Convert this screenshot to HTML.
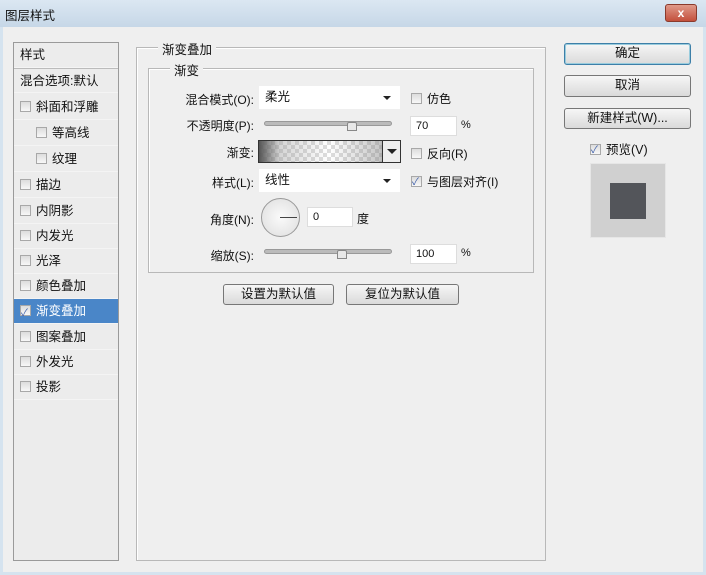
<!DOCTYPE html>
<html><head><meta charset="utf-8"><style>
*{box-sizing:border-box;margin:0;padding:0}
body{width:706px;height:575px;overflow:hidden;background:#d5e3ef;font-family:"Liberation Sans","Noto Sans CJK SC",sans-serif;font-size:12px;color:#111;position:relative}
.a{position:absolute}
.title{left:0;top:0;width:706px;height:27px;background:linear-gradient(#dbe7f2,#c6d7e7);}
.body{left:3px;top:27px;width:700px;height:545px;background:#efefef}
.list{left:13px;top:42px;width:106px;height:519px;border:1px solid #9a9a9a;background:#ececec}
.row{position:absolute;left:0;width:104px;height:25px;border-bottom:1px solid #f4f4f4;line-height:24px;padding-left:6px;font-size:12.5px}
.cb{display:inline-block;width:11px;height:11px;border:1px solid #a8a8a8;background:linear-gradient(#ddd,#f8f8f8);vertical-align:-1px;margin-right:5px;position:relative}
.chk::after{content:"✓";position:absolute;left:0;top:-4px;font-size:10px;color:#3a5ca8;}
.grp{border:1px solid #b8b8b8;box-shadow:inset 1px 1px 0 #fff}
.lg{position:absolute;background:#efefef;padding:0 4px;font-size:12.5px}
.lbl{position:absolute;text-align:right;font-size:12px}
.inp{position:absolute;background:#fff;border:1px solid #ddd;height:20px;line-height:19px;padding-left:5px;font-size:11px}
.sel{position:absolute;background:#fff;height:23px;line-height:23px;padding-left:6px;font-size:12.5px}
.sel::after{content:"";position:absolute;right:9px;top:10px;border:4px solid transparent;border-top:4px solid #222}
.track{position:absolute;height:5px;background:#bbb;border:1px solid #999;border-radius:3px}
.thumb{position:absolute;width:10px;height:9px;background:#e8e8e8;border:1px solid #888;border-radius:2px 2px 0 0}
.btn{position:absolute;border:1px solid #777;border-radius:3px;background:linear-gradient(#f6f6f6,#dadada);text-align:center;font-size:12.5px;line-height:19px}
</style></head><body>
<div class="a title"></div>
<div class="a" style="left:5px;top:5px;font-size:12.5px">图层样式</div>
<div class="a" style="left:665px;top:4px;width:32px;height:18px;background:linear-gradient(#e09a8a,#c3503c);border:1px solid #8a3a2c;border-radius:3px;color:#fff;text-align:center;font-weight:bold;line-height:16px">x</div>
<div class="a body"></div>

<div class="a list">
 <div class="row" style="top:0">样式</div>
 <div class="row" style="top:25px;border-top:1px solid #bbb">混合选项:默认</div>
 <div class="row" style="top:52px"><span class="cb"></span>斜面和浮雕</div>
 <div class="row" style="top:78px;padding-left:22px"><span class="cb"></span>等高线</div>
 <div class="row" style="top:104px;padding-left:22px"><span class="cb"></span>纹理</div>
 <div class="row" style="top:130px"><span class="cb"></span>描边</div>
 <div class="row" style="top:156px"><span class="cb"></span>内阴影</div>
 <div class="row" style="top:181px"><span class="cb"></span>内发光</div>
 <div class="row" style="top:206px"><span class="cb"></span>光泽</div>
 <div class="row" style="top:231px"><span class="cb"></span>颜色叠加</div>
 <div class="row" style="top:256px;background:#4a86c8;color:#fff"><span class="cb chk"></span>渐变叠加</div>
 <div class="row" style="top:282px"><span class="cb"></span>图案叠加</div>
 <div class="row" style="top:307px"><span class="cb"></span>外发光</div>
 <div class="row" style="top:332px"><span class="cb"></span>投影</div>
</div>

<div class="a grp" style="left:136px;top:47px;width:410px;height:514px"></div>
<div class="lg" style="left:158px;top:39px">渐变叠加</div>
<div class="a grp" style="left:148px;top:68px;width:386px;height:205px"></div>
<div class="lg" style="left:170px;top:60px">渐变</div>

<div class="lbl" style="left:150px;width:104px;top:91px">混合模式(O):</div>
<div class="sel" style="left:259px;top:86px;width:141px">柔光</div>
<div class="a" style="left:411px;top:90px"><span class="cb"></span>仿色</div>

<div class="lbl" style="left:150px;width:104px;top:117px">不透明度(P):</div>
<div class="track" style="left:264px;top:121px;width:128px"></div>
<div class="thumb" style="left:347px;top:122px"></div>
<div class="inp" style="left:410px;top:116px;width:47px">70</div>
<div class="a" style="left:461px;top:119px;font-size:11px">%</div>

<div class="lbl" style="left:150px;width:104px;top:144px">渐变:</div>
<div class="a" style="left:258px;top:140px;width:143px;height:23px;border:1px solid #333;background:linear-gradient(90deg,#555 0,rgba(150,150,150,.4) 15%,rgba(0,0,0,0) 50%,rgba(120,120,120,.4) 85%,#666 100%),repeating-conic-gradient(#ddd 0 25%,#fff 0 50%) 0 0/8px 8px"></div>
<div class="a" style="left:382px;top:140px;width:19px;height:23px;border:1px solid #333;background:#eee"><div style="position:absolute;left:4px;top:8px;border:5px solid transparent;border-top:5px solid #222"></div></div>
<div class="a" style="left:411px;top:145px"><span class="cb"></span>反向(R)</div>

<div class="lbl" style="left:150px;width:104px;top:174px">样式(L):</div>
<div class="sel" style="left:259px;top:169px;width:141px">线性</div>
<div class="a" style="left:411px;top:173px"><span class="cb chk"></span>与图层对齐(I)</div>

<div class="lbl" style="left:150px;width:104px;top:211px">角度(N):</div>
<div class="a" style="left:261px;top:198px;width:39px;height:39px;border-radius:50%;border:1px solid #999;background:radial-gradient(#fafafa,#ddd)"><div style="position:absolute;left:18px;top:18px;width:17px;height:1px;background:#444"></div></div>
<div class="inp" style="left:307px;top:207px;width:46px">0</div>
<div class="a" style="left:357px;top:210px">度</div>

<div class="lbl" style="left:150px;width:104px;top:247px">缩放(S):</div>
<div class="track" style="left:264px;top:249px;width:128px"></div>
<div class="thumb" style="left:337px;top:250px"></div>
<div class="inp" style="left:410px;top:244px;width:47px">100</div>
<div class="a" style="left:461px;top:247px;font-size:11px">%</div>

<div class="btn" style="left:223px;top:284px;width:111px;height:21px">设置为默认值</div>
<div class="btn" style="left:346px;top:284px;width:113px;height:21px">复位为默认值</div>

<div class="btn" style="left:564px;top:43px;width:127px;height:22px;border-color:#3d7fa8;box-shadow:inset 0 0 0 1px #9cd">确定</div>
<div class="btn" style="left:564px;top:75px;width:127px;height:22px">取消</div>
<div class="btn" style="left:564px;top:108px;width:127px;height:21px">新建样式(W)...</div>
<div class="a" style="left:590px;top:139px;font-size:12.5px"><span class="cb chk"></span>预览(V)</div>
<div class="a" style="left:590px;top:163px;width:76px;height:75px;background:#d0d0d0;border:1px solid #e6e6e6"></div>
<div class="a" style="left:610px;top:183px;width:36px;height:36px;background:#53555a"></div>
</body></html>
